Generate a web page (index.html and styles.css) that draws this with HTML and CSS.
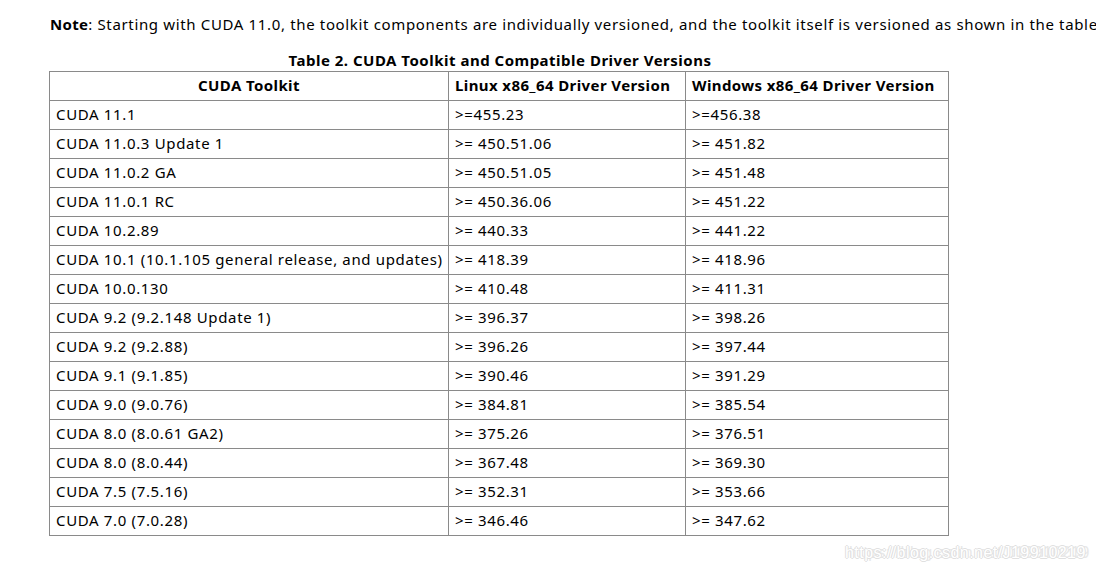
FILE: index.html
```html
<!DOCTYPE html>
<html>
<head>
<meta charset="utf-8">
<link rel="stylesheet" href="styles.css">
</head>
<body>
<div class="page">
  <p class="note"><b>Note</b>: Starting with CUDA 11.0, the toolkit components are individually versioned, and the toolkit itself is versioned as shown in the table</p>
  <table class="versions">
    <caption>Table 2. CUDA Toolkit and Compatible Driver Versions</caption>
    <colgroup>
      <col class="c1"><col class="c2"><col class="c3">
    </colgroup>
    <thead>
      <tr><th>CUDA Toolkit</th><th>Linux x86_64 Driver Version</th><th>Windows x86_64 Driver Version</th></tr>
    </thead>
    <tbody>
      <tr><td>CUDA 11.1</td><td>&gt;=455.23</td><td>&gt;=456.38</td></tr>
      <tr><td>CUDA 11.0.3 Update 1</td><td>&gt;= 450.51.06</td><td>&gt;= 451.82</td></tr>
      <tr><td>CUDA 11.0.2 GA</td><td>&gt;= 450.51.05</td><td>&gt;= 451.48</td></tr>
      <tr><td>CUDA 11.0.1 RC</td><td>&gt;= 450.36.06</td><td>&gt;= 451.22</td></tr>
      <tr><td>CUDA 10.2.89</td><td>&gt;= 440.33</td><td>&gt;= 441.22</td></tr>
      <tr><td>CUDA 10.1 (10.1.105 general release, and updates)</td><td>&gt;= 418.39</td><td>&gt;= 418.96</td></tr>
      <tr><td>CUDA 10.0.130</td><td>&gt;= 410.48</td><td>&gt;= 411.31</td></tr>
      <tr><td>CUDA 9.2 (9.2.148 Update 1)</td><td>&gt;= 396.37</td><td>&gt;= 398.26</td></tr>
      <tr><td>CUDA 9.2 (9.2.88)</td><td>&gt;= 396.26</td><td>&gt;= 397.44</td></tr>
      <tr><td>CUDA 9.1 (9.1.85)</td><td>&gt;= 390.46</td><td>&gt;= 391.29</td></tr>
      <tr><td>CUDA 9.0 (9.0.76)</td><td>&gt;= 384.81</td><td>&gt;= 385.54</td></tr>
      <tr><td>CUDA 8.0 (8.0.61 GA2)</td><td>&gt;= 375.26</td><td>&gt;= 376.51</td></tr>
      <tr><td>CUDA 8.0 (8.0.44)</td><td>&gt;= 367.48</td><td>&gt;= 369.30</td></tr>
      <tr><td>CUDA 7.5 (7.5.16)</td><td>&gt;= 352.31</td><td>&gt;= 353.66</td></tr>
      <tr><td>CUDA 7.0 (7.0.28)</td><td>&gt;= 346.46</td><td>&gt;= 347.62</td></tr>
    </tbody>
  </table>
</div>
<div class="watermark">https://blog.csdn.net/J19910219</div>
</body>
</html>
```
FILE: styles.css
```css
html, body {
  margin: 0;
  padding: 0;
  background: #ffffff;
  overflow: hidden;
}
body {
  width: 1096px;
  height: 572px;
  font-family: "Noto Sans", "Open Sans", sans-serif;
  font-size: 15px;
  color: #000000;
  position: relative;
}
.page {
  padding: 0 0 0 49px;
}
.note {
  margin: 0;
  padding: 13px 0 0 1px;
  height: 23px;
  line-height: 22px;
  white-space: nowrap;
  letter-spacing: 0.65px;
}
.note b {
  font-weight: bold;
  letter-spacing: 0.3px;
}
.versions {
  margin-top: 13px;
  border-collapse: collapse;
  width: 899px;
  table-layout: fixed;
}
.versions caption {
  font-weight: bold;
  letter-spacing: 0.5px;
  line-height: 22px;
  height: 22px;
  padding: 0 0 0 2px;
  text-align: center;
  white-space: nowrap;
}
.c1 { width: 399px; }
.c2 { width: 237px; }
.c3 { width: 263px; }
.versions th,
.versions td {
  border: 1px solid #8a8a8a;
  height: 28px;
  padding: 0 0 2px 6px;
  line-height: 26px;
  box-sizing: border-box;
  letter-spacing: 0.65px;
  white-space: nowrap;
  vertical-align: middle;
  text-align: left;
}
.versions th {
  font-weight: bold;
  letter-spacing: 0.4px;
}
.versions th:first-child {
  text-align: center;
  padding: 0 0 2px 0;
}
.versions tr {
  height: 29px;
}
.watermark {
  position: absolute;
  left: 845px;
  top: 544px;
  font-family: "Liberation Sans", sans-serif;
  font-size: 16px;
  line-height: 18px;
  white-space: nowrap;
  color: #ffffff;
  letter-spacing: 0.45px;
  text-shadow:
    1px 0 0 #e0e0e0, -1px 0 0 #e0e0e0, 0 1px 0 #e0e0e0, 0 -1px 0 #e0e0e0,
    4px 0 0 #e8e8e8;
}
```
